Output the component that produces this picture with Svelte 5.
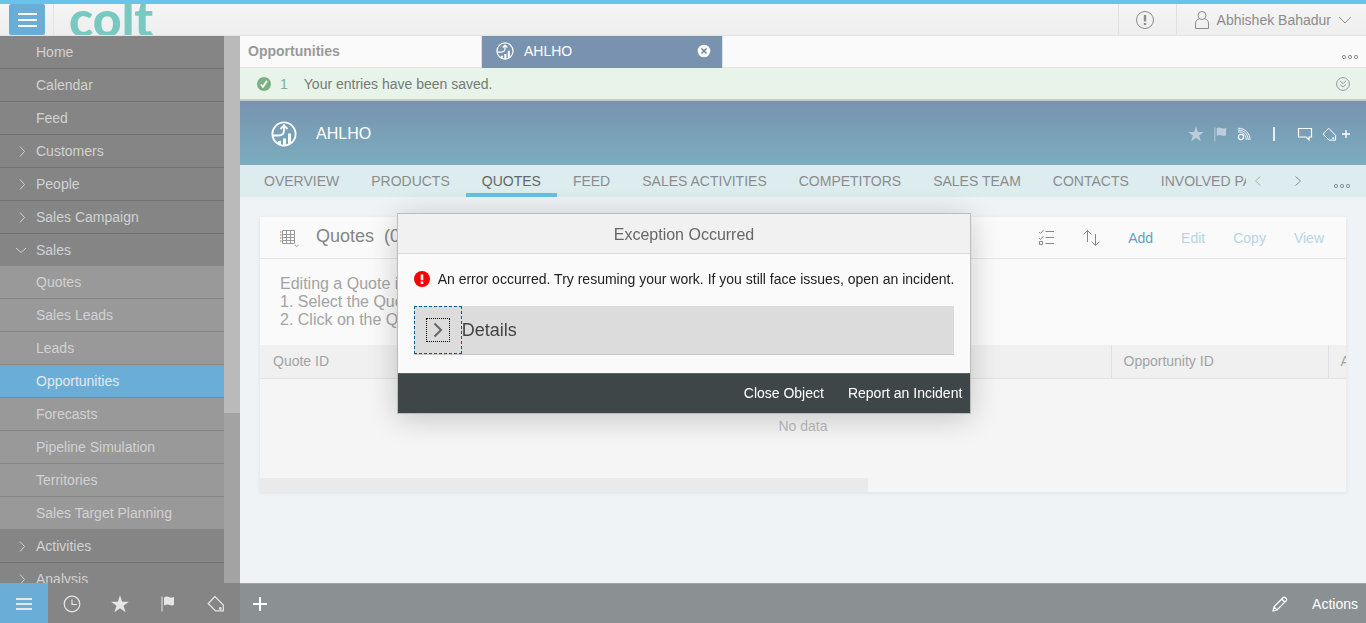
<script>
  const menu = [
    { label: 'Home' },
    { label: 'Calendar' },
    { label: 'Feed' },
    { label: 'Customers', group: true },
    { label: 'People', group: true },
    { label: 'Sales Campaign', group: true },
    {
      label: 'Sales',
      group: true,
      open: true,
      children: ['Quotes', 'Sales Leads', 'Leads', 'Opportunities', 'Forecasts', 'Pipeline Simulation', 'Territories', 'Sales Target Planning']
    },
    { label: 'Activities', group: true },
    { label: 'Analysis', group: true }
  ];
  const sections = ['OVERVIEW', 'PRODUCTS', 'QUOTES', 'FEED', 'SALES ACTIVITIES', 'COMPETITORS', 'SALES TEAM', 'CONTACTS', 'INVOLVED PARTIES'];
  let activeItem = $state('Opportunities');
  let activeSection = $state('QUOTES');
</script>

{#snippet opportunity(size)}
  <svg width={size} height={size} viewBox="0 0 26 26" fill="none" stroke="currentColor" stroke-width="1.800">
    <circle cx="13" cy="13" r="11.600" />
    <path d="M2 14.500h5.500c3.500 0 5.500-2 5.500-5V5M9.500 8 13 4.400 16.500 8" />
    <path d="M8.500 23.500v-3.500M13.500 24.500v-7M18.500 23v-10.500" stroke-width="3" />
  </svg>
{/snippet}

{#snippet star(size)}
  <svg width={size} height={size} viewBox="0 0 16 16" fill="currentColor"><path d="m8 .2 1.900 5.700h6L11.100 9.500l1.900 5.900L8 11.800l-5 3.600 1.900-5.900L.1 5.900h6z" /></svg>
{/snippet}

{#snippet flag(size)}
  <svg width={size} height={size} viewBox="0 0 16 16" fill="currentColor"><path d="M1.500.5h1v15h-1zM4 1.500C6-.2 8 .4 9.500 1.300c1.300.6 2.700.5 4.500-.6v8c-1.500 1-3 1-4.300.4C8 8.300 6 8.200 4 9.600z" /></svg>
{/snippet}

{#snippet tag(size)}
  <svg width={size} height={size} viewBox="0 0 18 18" fill="none" stroke="currentColor" stroke-width="1.200"><path d="M8 1.500 1.200 8.500 8.500 15.800h7.800V10z" /><circle cx="13.300" cy="13.500" r=".8" /></svg>
{/snippet}

{#snippet dots()}
  <svg width="18" height="6" viewBox="0 0 18 6" fill="none" stroke="currentColor"><circle cx="3" cy="3" r="1.600" /><circle cx="9" cy="3" r="1.600" /><circle cx="15" cy="3" r="1.600" /></svg>
{/snippet}

<div class="app">
  <header class="top">
    <button class="burger" aria-label="Toggle menu">
      <svg width="19" height="16" viewBox="0 0 19 16" stroke="currentColor" stroke-width="2"><path d="M0 2h19M0 8h19M0 14h19" /></svg>
    </button>
    <div class="brand">colt</div>
    <button class="alert" aria-label="Notifications">
      <svg width="20" height="20" viewBox="0 0 20 20" fill="none" stroke="currentColor"><circle cx="10" cy="10" r="8.500" /><path d="M10 5v6.500M10 13v2" stroke-width="2.400" /></svg>
    </button>
    <button class="user">
      <svg width="16" height="20" viewBox="0 0 16 20" fill="none" stroke="currentColor"><circle cx="8" cy="5.500" r="4" /><path d="M5 9C2.500 9.800 1.500 11 1.500 14v4.500h13V14c0-3-1-4.200-3.500-5" /></svg>
      <span>Abhishek Bahadur</span>
      <svg width="14" height="8" viewBox="0 0 14 8" fill="none" stroke="currentColor"><path d="m1 1 6 6 6-6" /></svg>
    </button>
  </header>

  <div class="work">
    <aside>
      <div class="scroller">
        <nav>
          {#each menu as item}
            <button class="item" class:open={item.open}>
              {#if item.group}
                <svg class="arrow" width="12" height="12" viewBox="0 0 12 12" fill="none" stroke="currentColor">
                  <path d={item.open ? 'm1 4 5 4.500L11 4' : 'm5 1.500 4.500 5L5 11.500'} />
                </svg>
              {/if}
              <span>{item.label}</span>
            </button>
            {#each item.children ?? [] as child}
              <button class="item sub" class:active={activeItem === child} onclick={() => (activeItem = child)}><span>{child}</span></button>
            {/each}
          {/each}
        </nav>
        <div class="track"><div class="thumb"></div></div>
      </div>
      <div class="dock">
        <button class="on" aria-label="Menu"><svg width="18" height="14" viewBox="0 0 18 14" stroke="currentColor" stroke-width="2"><path d="M1 2h16M1 7h16M1 12h16" /></svg></button>
        <button aria-label="Recent"><svg width="18" height="18" viewBox="0 0 18 18" fill="none" stroke="currentColor" stroke-width="1.200"><circle cx="9" cy="9" r="7.800" /><path d="M9 4.500V9.500h5" /></svg></button>
        <button aria-label="Favorites">{@render star(18)}</button>
        <button aria-label="Flagged">{@render flag(16)}</button>
        <button aria-label="Tags">{@render tag(18)}</button>
      </div>
    </aside>

    <main>
      <div class="windows">
        <button class="window first">Opportunities</button>
        <div class="window current">
          {@render opportunity(18)}
          <span>AHLHO</span>
          <button class="close" aria-label="Close tab">
            <svg width="14" height="14" viewBox="0 0 14 14"><circle cx="7" cy="7" r="6.300" fill="#fff" /><path d="m4.500 4.500 5 5m0-5-5 5" stroke="#5c7da4" stroke-width="1.400" /></svg>
          </button>
        </div>
        <button class="more" aria-label="More windows">{@render dots()}</button>
      </div>

      <div class="message" role="status">
        <svg width="14" height="14" viewBox="0 0 14 14"><circle cx="7" cy="7" r="7" fill="#7cb080" /><path d="m3.800 7.500 2.200 2.300 4-6" fill="none" stroke="#fff" stroke-width="1.800" /></svg>
        <span class="count">1</span>
        <span class="words">Your entries have been saved.</span>
        <button aria-label="Expand messages">
          <svg width="14" height="14" viewBox="0 0 14 14" fill="none" stroke="currentColor"><circle cx="7" cy="7" r="6.400" /><path d="m4 4 3 2.500L10 4M4 7.500 7 10l3-2.500" /></svg>
        </button>
      </div>

      <div class="object">
        {@render opportunity(26)}
        <h1>AHLHO</h1>
        <div class="tools">
          <button class="faint" aria-label="Favorite">{@render star(16)}</button>
          <button class="faint" aria-label="Flag">{@render flag(15)}</button>
          <button aria-label="Follow"><svg width="14" height="14" viewBox="0 0 14 14" fill="none" stroke="currentColor" stroke-width="1.100"><circle cx="4" cy="10" r="2.600" /><path d="M1 4.800c5 0 8.300 3.400 8.300 8.200M1 1.200c7 0 12 4.800 12 11.800M1 3c6 0 10.200 4 10.200 10" stroke-width=".9" /></svg></button>
          <span class="rule"></span>
          <button aria-label="Comment"><svg width="16" height="14" viewBox="0 0 16 14" fill="none" stroke="currentColor" stroke-width="1.200"><path d="M1.500 1.500h13v8.500h-2.500v3l-3-3H1.500z" /></svg></button>
          <button class="tags" aria-label="Add tag">{@render tag(15)}<svg width="8" height="8" viewBox="0 0 8 8" stroke="currentColor" stroke-width="1.300"><path d="M4 0v8M0 4h8" /></svg></button>
        </div>
      </div>

      <div class="sections">
        <div class="strip">
          {#each sections as section}
            <button class:selected={activeSection === section} onclick={() => (activeSection = section)}>{section}</button>
          {/each}
        </div>
        <div class="paging">
          <button class="dim" aria-label="Previous"><svg width="8" height="10" viewBox="0 0 8 10" fill="none" stroke="currentColor"><path d="M6.500.5 1.500 5l5 4.500" /></svg></button>
          <button aria-label="Next"><svg width="8" height="10" viewBox="0 0 8 10" fill="none" stroke="currentColor"><path d="m1.500.5 5 4.500-5 4.500" /></svg></button>
          <button class="low" aria-label="More sections">{@render dots()}</button>
        </div>
      </div>

      <div class="content">
        <section class="card">
          <div class="toolbar">
            <button class="views" aria-label="Views">
              <svg width="20" height="20" viewBox="0 0 20 20" fill="none" stroke="currentColor"><path d="M3.500 2.500h12v13h-12zM7.500 2.500v13M11.500 2.500v13M3.500 6.500h12M3.500 9.500h12M3.500 12.500h12" /><path d="M1 4h1.500M1 7h1.500M1 10h1.500M1 13h1.500" stroke="#d0b89c" stroke-width="2" /><path d="m16 17 1.700 1.500L19.500 17" /></svg>
            </button>
            <h2>Quotes&nbsp; (0)</h2>
            <div class="actions">
              <button class="glyph" aria-label="Select items">
                <svg width="16" height="17" viewBox="0 0 16 17" fill="none" stroke="currentColor"><path d="M7.500 2.500H16M7.500 8.500H16M7.500 14.500H16" /><path d="m1 3 1.500 1.500L5.500 1M1 9l1.500 1.500L5.500 7M1.500 12.500h3v3h-3z" /></svg>
              </button>
              <button class="glyph" aria-label="Sort">
                <svg width="18" height="18" viewBox="0 0 18 18" fill="none" stroke="currentColor"><path d="M5.500 13V1.500M1.500 5.500l4-4 4 4M13.500 5v11.500M9.500 12.500l4 4 4-4" /></svg>
              </button>
              <button>Add</button>
              <button disabled>Edit</button>
              <button disabled>Copy</button>
              <button disabled>View</button>
            </div>
          </div>
          <div class="help">
            <p>Editing a Quote is</p>
            <p>1. Select the Quote</p>
            <p>2. Click on the Quote</p>
          </div>
          <table>
            <thead><tr><th>Quote ID</th><th class="opp">Opportunity ID</th><th class="cut">Account</th></tr></thead>
            <tbody><tr><td colspan="3">No data</td></tr></tbody>
          </table>
          <div class="hbar"><div></div></div>
        </section>
      </div>

      <footer class="bottom">
        <button aria-label="New"><svg width="14" height="14" viewBox="0 0 14 14" stroke="currentColor" stroke-width="2"><path d="M7 0v14M0 7h14" /></svg></button>
        <div class="right">
          <button aria-label="Edit"><svg width="16" height="16" viewBox="0 0 16 16" fill="none" stroke="currentColor" stroke-width="1.200"><path d="m1 15 1-4.200L11.500 1.300c1-.8 3.800 1.600 3 3L5 14zM9.800 3.200 12.800 6M2 11l3 3" /></svg></button>
          <button>Actions</button>
        </div>
      </footer>
    </main>
  </div>

  <div class="overlay">
    <div class="dialog" role="alertdialog" aria-labelledby="dialog-title">
      <h3 id="dialog-title">Exception Occurred</h3>
      <div class="body">
        <div class="error">
          <svg width="16" height="16" viewBox="0 0 16 16"><circle cx="8" cy="8" r="8" fill="#f90000" /><path d="M8 3.500v5.700M8 10.500V13" stroke="#fff" stroke-width="2.600" /></svg>
          <span>An error occurred. Try resuming your work. If you still face issues, open an incident.</span>
        </div>
        <div class="details">
          <button aria-labelledby="details-label">
            <span><svg width="10" height="16" viewBox="0 0 10 16" fill="none" stroke="#666" stroke-width="2"><path d="m1.500 1.500 6.500 6.500-6.500 6.500" /></svg></span>
          </button>
          <div id="details-label">Details</div>
        </div>
      </div>
      <div class="choices"><button>Close Object</button><button>Report an Incident</button></div>
    </div>
  </div>
</div>

<style>
  :global(body) { margin: 0; }
  * { box-sizing: border-box; }
  .app {
    height: 100vh;
    display: flex;
    flex-direction: column;
    overflow: hidden;
    font: 14px/18px "Liberation Sans", Arial, sans-serif;
    color: #8c8c8c;
  }
  button { font: inherit; color: inherit; background: none; border: 0; padding: 0; margin: 0; white-space: nowrap; cursor: pointer; }
  svg { display: block; flex: none; }
  h1, h2, h3, p { margin: 0; font-weight: normal; }

  .top {
    flex: none;
    display: flex;
    align-items: stretch;
    height: 36px;
    border-top: 4px solid #69c3ea;
    border-bottom: 1px solid #e3e3e3;
    background: linear-gradient(#f5f5f5, #eee);
    overflow: hidden;
  }
  .burger { width: 36px; margin-left: 9px; display: grid; place-items: center; background: #6aaed8; color: #fff; border-radius: 2px; }
  .brand {
    margin-left: 8px;
    padding-left: 15px;
    border-left: 1px solid #e3e3e3;
    font: 900 50px/29px Lato, sans-serif;
    color: #79c9c1;
    flex: 1;
  }
  .alert { width: 58px; padding-left: 16px; border-left: 1px solid #e0e0e0; }
  .user { display: flex; align-items: center; gap: 7px; padding: 0 14px 0 17px; border-left: 1px solid #e0e0e0; }

  .work { flex: 1; min-height: 0; display: flex; }
  aside { flex: none; width: 240px; display: flex; flex-direction: column; background: #858585; }
  .scroller { flex: 1; min-height: 0; display: flex; overflow: hidden; }
  nav { flex: 1; }
  .item { width: 100%; height: 33px; padding-left: 36px; display: flex; align-items: center; background: #858585; color: #d2d2d2; border-bottom: 1px solid #707070; }
  .item.open { height: 32px; border-bottom: 0; }
  .item.sub { background: #999; border-color: #858585; }
  .item.active { background: #6aaed8; color: #e3e8ec; }
  .arrow { margin: 0 9px 0 -21px; }
  .track { width: 16px; background: #a3a3a3; }
  .thumb { height: 69%; background: #bababa; }
  .dock { flex: none; height: 40px; display: flex; color: #e6e6e6; }
  .dock button { flex: 1; display: grid; place-items: center; padding-top: 2px; }
  .dock .on { background: #6aaed8; }

  main { flex: 1; min-width: 0; display: flex; flex-direction: column; background: #eff3f5; }
  .windows { flex: none; height: 32px; display: flex; background: #fafafa; border-bottom: 1px solid #e3e3e3; }
  .window { width: 242px; padding: 0 8px 2px; display: flex; align-items: center; border-right: 1px solid #e0e0e0; }
  .window.first { font-weight: bold; color: #999; }
  .window.current { height: 32px; width: 241px; padding: 0 11px 2px 14px; gap: 10px; background: #7892b0; color: #fff; }
  .close { margin-left: auto; }
  .more { margin-left: auto; padding: 10px 7px 0 0; }

  .message { flex: none; height: 33px; padding: 0 16px 0 17px; display: flex; align-items: center; background: #e8f3ea; border-bottom: 2px solid #c4cac6; }
  .count { margin-left: 9px; color: #7cb080; }
  .words { margin-left: 16px; color: #757a75; }
  .message button { margin-left: auto; color: #999; }

  .object { flex: none; height: 64px; padding: 2px 16px 0 31px; display: flex; align-items: center; background: linear-gradient(#7793b0, #7cadbe); color: #fff; }
  h1 { margin-left: 19px; font-size: 16px; line-height: 20px; }
  .tools { margin-left: auto; display: flex; align-items: center; gap: 9px; }
  .faint { color: #bccdd9; }
  .rule { width: 2px; height: 14px; margin: 0 13px; background: #e8eff3; }
  .tags { display: flex; align-items: center; gap: 5px; }

  .sections { flex: none; height: 32px; display: flex; background: #dcecef; }
  .strip { flex: 1; min-width: 0; display: flex; overflow: hidden; padding-left: 8px; }
  .strip button { flex: none; padding: 0 16px; border-bottom: 4px solid transparent; border-top: 4px solid transparent; }
  .strip .selected { border-bottom-color: #69bfe7; color: #666; }
  .paging { flex: none; width: 120px; display: flex; align-items: center; padding: 0 15px 0 8px; }
  .paging button + button { margin-left: 32px; }
  .paging .dim { color: #aab3b5; }
  .paging button.low { padding-top: 9px; margin-left: 31px; }

  .content { flex: 1; min-height: 0; padding: 20px; }
  .card { background: #fafafa; box-shadow: 0 1px 4px rgba(0, 0, 0, 0.08); overflow: hidden; }
  .toolbar { height: 42px; padding: 0 22px 0 19px; display: flex; align-items: center; border-bottom: 1px solid #e6e6e6; }
  .views { color: #999; }
  h2 { margin-left: 17px; font-size: 18px; line-height: 22px; padding-bottom: 4px; color: #858585; }
  .actions { margin-left: auto; display: flex; align-items: center; gap: 28px; color: #629fc5; }
  .glyph { color: #888; }
  .actions button:disabled { color: #b8d3e3; }
  .help { padding: 16px 20px; font-size: 16px; line-height: 18px; color: #a3a3a3; }
  table { width: 100%; table-layout: fixed; border-collapse: collapse; background: #f5f5f5; }
  th { height: 33px; padding: 0 13px; text-align: left; font-weight: normal; color: #a3a3a3; background: #f0f0f0; border-bottom: 1px solid #e2e2e2; overflow: hidden; white-space: nowrap; }
  th.opp { width: 217px; padding: 0 12px; border-left: 1px solid #e0e0e0; }
  th.cut { width: 18px; padding: 0 0 0 12px; border-left: 1px solid #e0e0e0; }
  td { height: 100px; padding: 0 0 4px; text-align: center; color: #bababa; }
  .hbar { height: 14px; background: #f5f5f5; }
  .hbar div { width: 56%; height: 100%; background: #eaeaea; }

  .bottom { flex: none; height: 40px; display: flex; align-items: center; justify-content: space-between; padding: 0 8px 0 13px; background: #8b9092; border-top: 1px solid #a0a5a6; color: #fff; }
  .right { display: flex; align-items: center; gap: 24px; }

  .overlay { position: fixed; inset: 4px 0 0 2px; display: grid; place-items: center; }
  .dialog { background: #fafafa; border: 1px solid #bcbcbc; box-shadow: 0 4px 28px rgba(0, 0, 0, 0.2); }
  h3 { height: 40px; font-size: 16px; line-height: 42px; text-align: center; color: #666; background: #f1f1f1; border-bottom: 1px solid #dadada; }
  .body { padding: 16px; height: 119px; }
  .error { display: flex; align-items: center; gap: 8px; color: #222; }
  .details { display: flex; align-items: center; height: 49px; margin-top: 18px; background: #dcdcdc; border-bottom: 1px solid #c6c6c6; font-size: 18px; color: #444; }
  .details button { width: 48px; height: 48px; border: 1px dashed #005d8f; display: grid; place-items: center; }
  .details button span { width: 24px; height: 24px; border: 1px dotted #000; display: grid; place-items: center; }
  .choices { height: 40px; padding: 0 8px 2px; display: flex; align-items: center; justify-content: flex-end; gap: 24px; background: #3f4648; border-top: 1px solid #5b6467; color: #fff; text-shadow: 0 1px 1px #000; }
</style>
